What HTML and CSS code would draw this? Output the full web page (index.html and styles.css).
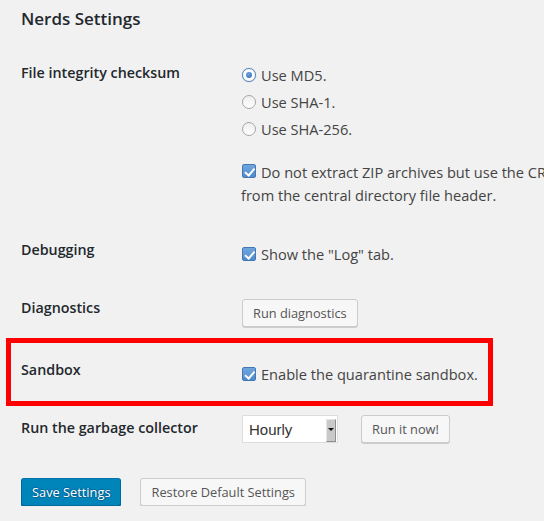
FILE: index.html
```html
<!DOCTYPE html>
<html>
<head>
<meta charset="utf-8">
<title>Nerds Settings</title>
<link rel="stylesheet" href="styles.css">
</head>
<body>
<div class="wrap">
  <h2 class="title">Nerds Settings</h2>

  <div class="row row-checksum">
    <div class="th">File integrity checksum</div>
    <div class="td">
      <label class="opt"><input type="radio" name="cs" checked><span>Use MD5.</span></label>
      <label class="opt"><input type="radio" name="cs"><span>Use SHA-1.</span></label>
      <label class="opt"><input type="radio" name="cs"><span>Use SHA-256.</span></label>
      <p class="note"><label class="nowrap"><input type="checkbox" checked>Do not extract ZIP archives but use the CRC32 checksums</label><br>from the central directory file header.</p>
    </div>
  </div>

  <div class="row row-debug">
    <div class="th">Debugging</div>
    <div class="td"><label class="opt-line"><input type="checkbox" checked>Show the "Log" tab.</label></div>
  </div>

  <div class="row row-diag">
    <div class="th">Diagnostics</div>
    <div class="td"><button class="button" type="button">Run diagnostics</button></div>
  </div>

  <div class="row row-sandbox">
    <div class="th">Sandbox</div>
    <div class="td"><label class="opt-line"><input type="checkbox" checked>Enable the quarantine sandbox.</label></div>
  </div>

  <div class="row row-gc">
    <div class="th">Run the garbage collector</div>
    <div class="td gc-controls">
      <span class="select-wrap">
        <select class="select"><option>Hourly</option><option>Daily</option><option>Weekly</option></select>
        <span class="select-arrow"></span>
      </span>
      <button class="button" type="button">Run it now!</button>
    </div>
  </div>

  <div class="submit-row">
    <button class="button button-primary" type="button">Save Settings</button>
    <button class="button" type="button">Restore Default Settings</button>
  </div>
</div>
</body>
</html>
```

FILE: styles.css
```css
html, body {
  margin: 0;
  padding: 0;
  background: #f1f1f1;
  overflow: hidden;
}

body {
  font-family: "Open Sans", "DejaVu Sans", sans-serif;
  font-size: 14px;
  color: #444;
}

.wrap {
  padding-left: 21px;
}

.title {
  margin: 0;
  padding-top: 7px;
  font-size: 17px;
  line-height: 24px;
  font-weight: 600;
  color: #23282d;
}

.row {
  display: grid;
  grid-template-columns: 220px 1fr;
  align-items: start;
}

.th {
  font-size: 14.3px;
  font-weight: 600;
  color: #23282d;
  line-height: 20px;
}

.td {
  font-size: 14.6px;
  line-height: 20px;
}

/* Row 1 */
.row-checksum { padding-bottom: 18px; }
.row-checksum .th { padding-top: 32px; }
.row-checksum .td { padding-top: 30px; }

.opt {
  display: flex;
  align-items: center;
  height: 27px;
}

.note {
  margin: 19px 0 0;
  line-height: 23px;
}

.nowrap {
  white-space: nowrap;
}

.opt-line {
  display: inline-flex;
  align-items: center;
}

/* Row 2 */
.row-debug { height: 58px; }
.row-debug .th { padding-top: 15px; }
.row-debug .td { padding-top: 19px; }

/* Row 3 */
.row-diag { height: 55px; }
.row-diag .th { padding-top: 15px; }
.row-diag .td { padding-top: 16px; }

/* Row 4 (highlighted) */
.row-sandbox {
  box-sizing: border-box;
  height: 68px;
  width: 487px;
  margin-left: -15px;
  padding-left: 10px;
  border: 5px solid #ff0000;
}
.row-sandbox .th { padding-top: 17px; }
.row-sandbox .td { padding-top: 21px; }

/* Row 5 */
.row-gc { padding-bottom: 35px; }
.row-gc .th { padding-top: 12px; }
.row-gc .td { padding-top: 9px; }

.gc-controls {
  display: flex;
  align-items: flex-start;
  gap: 23px;
}

/* Inputs */
input[type="radio"],
input[type="checkbox"] {
  -webkit-appearance: none;
  appearance: none;
  box-sizing: border-box;
  width: 14px;
  height: 14px;
  margin: 0 5px 0 1px;
  flex: none;
  position: relative;
}

input[type="radio"] {
  border-radius: 50%;
  border: 1px solid #a6a6a6;
  background: linear-gradient(#eeeeee, #ffffff);
}

input[type="radio"]:checked {
  border-color: #5d87b8;
  background: #fdfdfd;
  box-shadow: 0 0 1px 0 #89b0dc;
}

input[type="radio"]:checked::before {
  content: "";
  position: absolute;
  left: 3px;
  top: 3px;
  width: 6px;
  height: 6px;
  border-radius: 50%;
  background: radial-gradient(circle at 40% 35%, #6fa3de, #2f68b0);
}

input[type="checkbox"] {
  border: 1px solid #4478b4;
  border-radius: 2px;
  background: linear-gradient(#70a6de, #4f8cca);
}

input[type="checkbox"]:checked::before {
  content: "";
  position: absolute;
  left: 3.5px;
  top: 0.5px;
  width: 3.5px;
  height: 7.5px;
  border-right: 2px solid #ffffff;
  border-bottom: 2px solid #ffffff;
  transform: rotate(40deg);
}

/* Buttons */
.button {
  box-sizing: border-box;
  height: 28px;
  margin: 0;
  padding: 0 10px 1px;
  font-family: "Open Sans", "DejaVu Sans", sans-serif;
  font-size: 12.8px;
  line-height: 26px;
  color: #555;
  background: #f7f7f7;
  border: 1px solid #cccccc;
  border-radius: 3px;
  box-shadow: 0 1px 0 #cccccc;
  white-space: nowrap;
  cursor: pointer;
}

.row-diag .button { margin-left: 1px; }

.button-primary {
  color: #ffffff;
  background: #0085ba;
  border-color: #0073aa #006799 #006799;
  box-shadow: 0 1px 0 #006799;
  text-shadow: 0 -1px 1px #006799, 1px 0 1px #006799, 0 1px 1px #006799, -1px 0 1px #006799;
}

/* Select */
.select-wrap {
  position: relative;
  display: inline-block;
  margin-left: 1px;
}

.select {
  -webkit-appearance: none;
  appearance: none;
  box-sizing: border-box;
  display: block;
  width: 96px;
  height: 28px;
  margin: 0;
  padding: 0 0 0 6px;
  font-family: "Liberation Sans", Arial, sans-serif;
  font-size: 15px;
  color: #333;
  background: #ffffff;
  border: 1px solid #dddddd;
  border-radius: 0;
  outline: none;
}

.select-arrow {
  position: absolute;
  top: 4px;
  right: 2px;
  width: 10px;
  height: 23px;
  box-sizing: border-box;
  background: #c9c9c9;
  border-right: 1px solid #8e8e8e;
  border-bottom: 1px solid #8e8e8e;
  border-top: 1px solid #e4e4e4;
  border-left: 1px solid #e4e4e4;
  pointer-events: none;
}

.select-arrow::after {
  content: "";
  position: absolute;
  left: 1px;
  top: 8px;
  border-left: 3px solid transparent;
  border-right: 3px solid transparent;
  border-top: 3px solid #111;
}

/* Submit */
.submit-row {
  display: flex;
  gap: 19px;
}
```
